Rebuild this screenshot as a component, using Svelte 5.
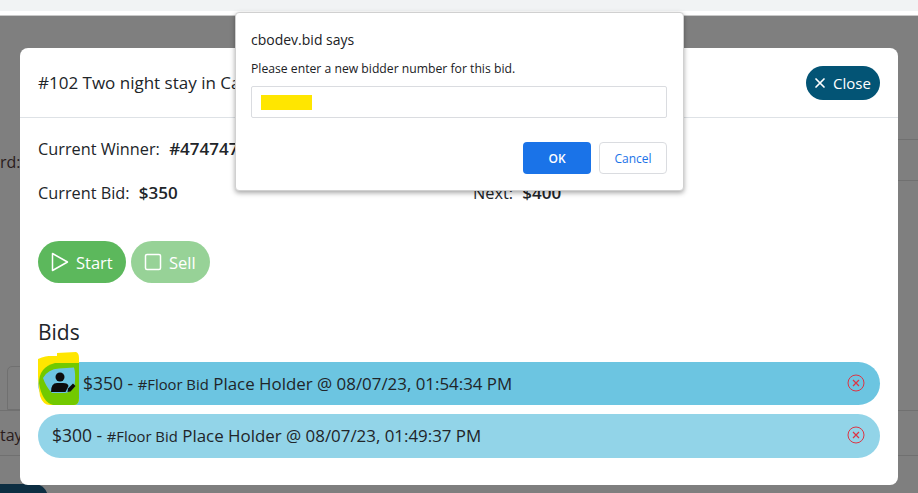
<script>
    const bids = [
        { amount: '$350', who: 'Place Holder', time: '08/07/23, 01:54:34 PM', top: true },
        { amount: '$300', who: 'Place Holder', time: '08/07/23, 01:49:37 PM', top: false },
    ]
</script>

<div class="browser-strip"></div>

<div class="page">
    <span class="bg-text card">rd:</span>
    <span class="bg-text stay">tay</span>
    <div class="bg-line l1"></div>
    <div class="bg-line l2"></div>
    <div class="bg-line l3"></div>
    <div class="bg-line l4"></div>
    <div class="bg-tab"></div>
    <div class="bg-button"></div>

    <div class="modal">
        <div class="modal-header">
            <h5>#102 Two night stay in Cabo</h5>
            <button class="close">
                <svg width="14" height="14" viewBox="0 0 14 14"><path d="M3 3l8 8M11 3l-8 8" stroke="currentColor" stroke-width="1.7" stroke-linecap="round" /></svg>
                Close
            </button>
        </div>
        <div class="modal-body">
            <div class="stats">
                <div>Current Winner: <b>#474747</b></div>
                <div></div>
                <div>Current Bid: <b>$350</b></div>
                <div class="next">Next: <b>$400</b></div>
            </div>
            <div class="actions">
                <button class="start">
                    <svg width="18" height="20" viewBox="0 0 18 20"><path d="M1.500 1.500v17L16.500 10z" fill="none" stroke="currentColor" stroke-width="1.500" stroke-linejoin="round" /></svg>
                    Start
                </button>
                <button class="sell">
                    <svg width="18" height="18" viewBox="0 0 18 18"><rect x="1.500" y="1.500" width="15" height="15" rx="1.500" fill="none" stroke="currentColor" stroke-width="1.500" /></svg>
                    Sell
                </button>
            </div>
            <h4>Bids</h4>
            <div class="bid-list">
                {#each bids as bid}
                    <div class="bid" class:top={bid.top}>
                        {#if bid.top}
                            <svg class="scribble" width="42" height="54" viewBox="0 0 42 54">
                                <path d="M0 7C8 3 14 4 19 4V1L38 0Q41 1 41 6L41 46Q41 53 36 53H12Q5 53 2 44Q-1 24 0 7Z" fill="#ffe600" />
                                <path d="M1 31Q1 15 17 11H41V46Q41 53 36 53H15Q4 50 1 31Z" fill="#72c900" />
                                <path d="M5 26Q10 17 21 16.500L36 15.500Q38 22 36.500 34Q32 41 27 41H14Q8 35 5 26Z" fill="#6cc5e1" />
                            </svg>
                            <svg class="bidder-icon" width="26" height="22" viewBox="0 0 26 22">
                                <circle cx="10" cy="6" r="4.500" fill="#0c0c0c" />
                                <path d="M1 21Q1 12 7 12H13Q18 12 18.500 15L15.500 21Z" fill="#0c0c0c" />
                                <path d="M17.500 21L18 17.500L23 12.500L25.500 15L20.500 20.500Z" fill="#0c0c0c" />
                            </svg>
                        {/if}
                        <span>{bid.amount} - <small>#Floor Bid</small> <span class="who">{bid.who} @ {bid.time}</span></span>
                        <svg class="remove" width="18" height="18" viewBox="0 0 18 18">
                            <circle cx="9" cy="9" r="8" fill="none" stroke="#dc3545" stroke-width="1" />
                            <path d="M6 6l6 6M12 6l-6 6" stroke="#dc3545" stroke-width="1.200" />
                        </svg>
                    </div>
                {/each}
            </div>
        </div>
    </div>
</div>

<div class="alert">
    <div class="alert-title">cbodev.bid says</div>
    <div class="alert-message">Please enter a new bidder number for this bid.</div>
    <div class="alert-input"><span class="redact"></span></div>
    <div class="alert-actions">
        <button class="ok">OK</button>
        <button class="cancel">Cancel</button>
    </div>
</div>

<style>
    :global(body) {
        margin: 0;
        background: #fff;
        overflow: hidden;
        font-family: "Open Sans", "Noto Sans", sans-serif;
    }

    .browser-strip {
        height: 11px;
        background: #f1f3f4;
        margin-bottom: 4px;
    }

    .page {
        position: relative;
        height: 478px;
        background: #7f7f7f;
        border-top: 1px solid #c9c9c9;
        box-sizing: border-box;
        overflow: hidden;
    }

    .bg-text {
        position: absolute;
        font-size: 16px;
        color: #2a1c1c;
    }
    .card { left: 0; top: 135px; }
    .stay { left: 0; top: 408px; }

    .bg-line {
        position: absolute;
        height: 1px;
        background: #707070;
    }
    .l1 { left: 898px; right: 0; top: 123px; }
    .l2 { left: 898px; right: 0; top: 164px; }
    .l3 { left: 0; right: 0; top: 394px; }
    .l4 { left: 0; right: 0; top: 439px; }

    .bg-tab {
        position: absolute;
        left: 7px;
        top: 350px;
        width: 30px;
        height: 44px;
        border: 1px solid #707070;
        border-radius: 5px 5px 0 0;
        box-sizing: border-box;
    }

    .bg-button {
        position: absolute;
        left: -20px;
        top: 468px;
        width: 68px;
        height: 30px;
        border-radius: 14px;
        background: #0d2e42;
    }

    .modal {
        position: absolute;
        left: 20px;
        top: 32px;
        width: 878px;
        height: 437px;
        background: #fff;
        border-radius: 8px;
        color: #212529;
    }

    .modal-header {
        display: flex;
        align-items: center;
        justify-content: space-between;
        height: 69px;
        padding: 0 18px;
        border-bottom: 1px solid #dee2e6;
    }

    h5 {
        margin: 0;
        font-size: 17px;
        font-weight: 500;
    }

    .close {
        display: flex;
        align-items: center;
        gap: 6px;
        height: 34px;
        padding: 0 0 0 7px;
        width: 74px;
        border: 0;
        border-radius: 17px;
        background: #035475;
        color: #fff;
        font: inherit;
        font-size: 15px;
    }

    .modal-body {
        padding: 0 18px;
    }

    .stats {
        display: grid;
        grid-template-columns: 435px 1fr;
        row-gap: 24px;
        padding-top: 21px;
        font-size: 16.300px;
        line-height: 20px;
    }

    .stats b {
        font-size: 17px;
        font-weight: 600;
        margin-left: 5px;
    }

    .actions {
        display: flex;
        gap: 5px;
        margin-top: 38px;
    }

    .actions button {
        display: flex;
        align-items: center;
        gap: 7px;
        height: 42px;
        padding: 0 0 0 13px;
        border: 0;
        border-radius: 21px;
        color: #fff;
        font: inherit;
        font-size: 16.500px;
    }

    .start { width: 88px; background: #5cb85c; }
    .sell { width: 79px; background: #97d297; }

    h4 {
        margin: 36px 0 17px;
        font-size: 21px;
        line-height: 26px;
        font-weight: 500;
    }

    .bid-list {
        display: flex;
        flex-direction: column;
        gap: 9px;
    }

    .bid {
        position: relative;
        display: flex;
        align-items: center;
        box-sizing: border-box;
        height: 44px;
        padding: 0 15px 2px 14px;
        border-radius: 22px;
        background: #92d4e8;
        font-size: 17.500px;
    }

    .bid.top {
        height: 43px;
        padding-left: 45px;
        background: #6cc5e1;
    }

    .bid small {
        font-size: 14.800px;
    }

    .who {
        font-size: 16.900px;
    }

    .remove {
        margin-left: auto;
    }

    .scribble {
        position: absolute;
        left: 0;
        top: -10px;
    }

    .bidder-icon {
        position: absolute;
        left: 12px;
        top: 9px;
    }

    .alert {
        position: absolute;
        left: 235px;
        top: 12px;
        box-sizing: border-box;
        width: 449px;
        height: 179px;
        padding: 19px 16px 0 15px;
        background: #fff;
        border: 1px solid #d0d0d0;
        border-radius: 4px;
        box-shadow: 0 2px 5px rgba(0, 0, 0, 0.35);
        color: #202124;
    }

    .alert-title {
        font-size: 14px;
        line-height: 16px;
    }

    .alert-message {
        margin-top: 13px;
        font-size: 12.200px;
        line-height: 16px;
    }

    .alert-input {
        display: flex;
        align-items: center;
        height: 32px;
        margin-top: 9px;
        padding-left: 9px;
        border: 1px solid #dadce0;
        border-radius: 2px;
        box-sizing: border-box;
    }

    .redact {
        width: 51px;
        height: 15px;
        background: #ffe600;
    }

    .alert-actions {
        display: flex;
        justify-content: flex-end;
        gap: 8px;
        margin-top: 24px;
    }

    .alert-actions button {
        width: 68px;
        height: 32px;
        border-radius: 4px;
        font: inherit;
        font-size: 12px;
        padding: 0;
    }

    .ok {
        border: 0;
        background: #1a73e8;
        color: #fff;
        font-weight: 600 !important;
    }

    .cancel {
        border: 1px solid #dadce0;
        background: #fff;
        color: #1a73e8;
    }
</style>
